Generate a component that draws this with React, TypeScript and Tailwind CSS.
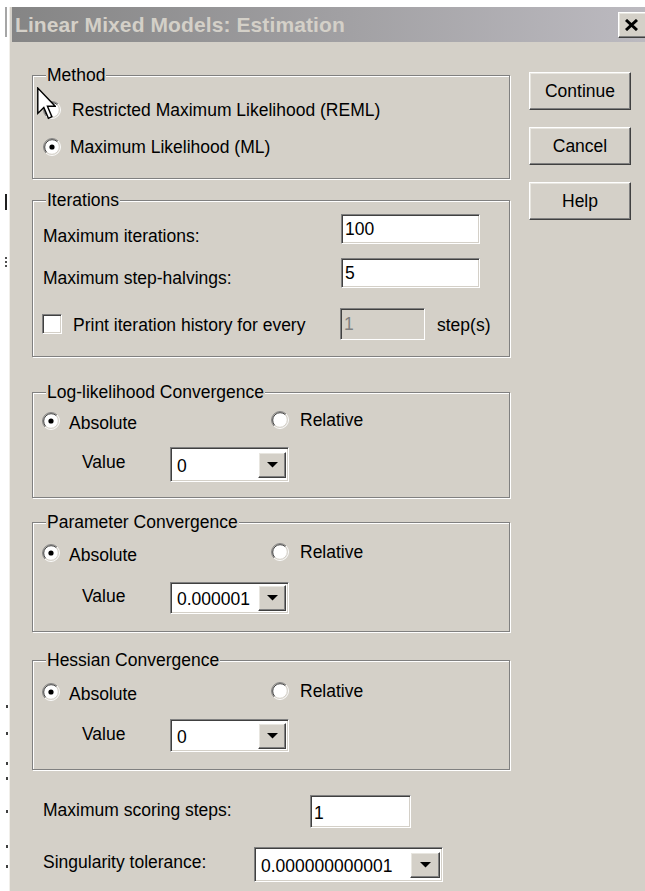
import type { ReactNode } from "react";

const sunken =
  "border border-t-[#808080] border-l-[#808080] border-r-white border-b-white shadow-[inset_1px_1px_0_#404040,inset_-1px_-1px_0_#d4d0c8]";
const raised =
  "border border-t-white border-l-white border-r-[#404040] border-b-[#404040] shadow-[inset_-1px_-1px_0_#808080,inset_1px_1px_0_#e8e6e0]";

const Radio = ({ checked = false }: { checked?: boolean }) => (
  <svg width="18" height="18" viewBox="0 0 18 18" className="shrink-0">
    <circle cx="9" cy="9" r="7.5" fill="#fff" />
    <path d="M2.99 15.01 A8.5 8.5 0 0 1 15.01 2.99" fill="none" stroke="#808080" />
    <path d="M15.01 2.99 A8.5 8.5 0 0 1 2.99 15.01" fill="none" stroke="#fff" />
    <path d="M3.7 14.3 A7.5 7.5 0 0 1 14.3 3.7" fill="none" stroke="#404040" />
    <path d="M14.3 3.7 A7.5 7.5 0 0 1 3.7 14.3" fill="none" stroke="#d4d0c8" />
    {checked && <circle cx="9" cy="9" r="2.6" fill="#000" />}
  </svg>
);

const Arrow = () => (
  <svg width="11" height="6" viewBox="0 0 11 6">
    <polygon points="0,0 11,0 5.5,5.5" fill="#000" />
  </svg>
);

const Combo = ({ value, w, h, btn = 28 }: { value: string; w: number; h: number; btn?: number }) => (
  <div
    className={`flex items-center bg-white ${sunken} ${w === 189 ? "w-[189px]" : "w-[119px]"} ${
      h === 35 ? "h-[35px]" : h === 32 ? "h-[32px]" : h === 33 ? "h-[33px]" : "h-[34px]"
    }`}
  >
    <span className="flex-1 pl-[6px] pt-[2px]">{value}</span>
    <div
      className={`mr-[2px] h-[26px] flex items-center justify-center bg-[#d4d0c8] ${raised} ${
        btn === 30 ? "w-[30px]" : "w-[28px]"
      }`}
    >
      <Arrow />
    </div>
  </div>
);

const GroupBox = ({ title, className, children }: { title: string; className: string; children: ReactNode }) => (
  <div className={`relative border border-[#808080] shadow-[1px_1px_0_#fff,inset_1px_1px_0_#fff] ${className}`}>
    <span className="absolute -top-[11px] left-[13px] px-[1px] bg-[#d4d0c8] leading-[20px]">{title}</span>
    {children}
  </div>
);

const RadioPair = ({ className }: { className: string }) => (
  <div className={`flex items-center h-[20px] pl-[9px] ${className}`}>
    <div className="flex items-center gap-[9px] w-[229px]">
      <Radio checked />
      <span className="pt-[3px]">Absolute</span>
    </div>
    <div className="flex items-center gap-[11px] -mt-[2px]">
      <Radio />
      <span>Relative</span>
    </div>
  </div>
);

const PushButton = ({ label }: { label: string }) => (
  <button className={`w-[102px] h-[38px] bg-[#d4d0c8] ${raised} flex items-center justify-center`}>{label}</button>
);

const Cursor = () => (
  <svg width="19" height="33" viewBox="0 0 12 20.5" className="absolute left-[37px] top-[87px]">
    <path
      d="M0.5 0.5 L0.5 16.5 L4.3 12.8 L7.2 19.6 L9.4 18.6 L6.6 12 L11.5 12 Z"
      fill="#fff"
      stroke="#000"
      strokeWidth="0.9"
      strokeLinejoin="miter"
    />
  </svg>
);

export default function App() {
  return (
    <div className="relative flex w-[645px] h-[891px] overflow-hidden bg-white text-black text-[17.5px] leading-[20px] font-['Liberation_Sans',Arial,sans-serif]">
      {/* scraps of the window behind */}
      <div className="w-[9px] shrink-0 flex flex-col">
        <div className="ml-[5px] w-[2px] mt-[7px] h-[30px] bg-[#a6a6a6]" />
        <div className="ml-[5px] w-[2px] mt-[157px] h-[16px] bg-[#202020]" />
        <div className="ml-[5px] w-[2px] mt-[47px] h-[2px] bg-[#505050]" />
        <div className="ml-[5px] w-[2px] mt-[2px] h-[2px] bg-[#505050]" />
        <div className="ml-[5px] w-[2px] mt-[2px] h-[2px] bg-[#505050]" />
        <div className="ml-[6px] w-[2px] mt-[438px] h-[3px] bg-[#404040]" />
        <div className="ml-[6px] w-[2px] mt-[24px] h-[3px] bg-[#404040]" />
        <div className="ml-[6px] w-[2px] mt-[27px] h-[3px] bg-[#404040]" />
        <div className="ml-[6px] w-[2px] mt-[12px] h-[3px] bg-[#404040]" />
        <div className="ml-[6px] w-[2px] mt-[30px] h-[3px] bg-[#404040]" />
        <div className="ml-[6px] w-[2px] mt-[32px] h-[3px] bg-[#404040]" />
        <div className="ml-[6px] w-[2px] mt-[17px] h-[3px] bg-[#404040]" />
      </div>

      <div className="flex-1 mt-[7px] flex flex-col bg-[#d4d0c8] border-l border-[#f1efea]">
        {/* caption */}
        <div className="ml-[2px] h-[35px] flex items-center overflow-hidden bg-gradient-to-r from-[#858585] to-[#bcbac0]">
          <span className="pl-[3px] font-bold text-[21px] text-[#d4d0c8] tracking-[0.1px]">
            Linear Mixed Models: Estimation
          </span>
          <div className={`ml-auto -mr-[3px] w-[30px] h-[26px] bg-[#d4d0c8] ${raised} flex items-center justify-center`}>
            <svg width="13" height="12" viewBox="0 0 13 12" className="-ml-[3px]">
              <path d="M1 1 L12 11 M12 1 L1 11" stroke="#000" strokeWidth="3" />
            </svg>
          </div>
        </div>

        <div className="flex pl-[22px]">
          <div className="w-[478px] flex flex-col">
            <GroupBox title="Method" className="mt-[33px] h-[104px] pt-[19px] pl-[10px] flex flex-col gap-[7px]">
              <div className="flex items-center h-[30px] gap-[11px]">
                <Radio />
                <span>Restricted Maximum Likelihood (REML)</span>
              </div>
              <div className="flex items-center h-[30px] gap-[9px]">
                <Radio checked />
                <span>Maximum Likelihood (ML)</span>
              </div>
            </GroupBox>

            <GroupBox title="Iterations" className="mt-[21px] h-[157px] pt-[13px] pl-[10px] flex flex-col">
              <div className="flex items-start h-[30px]">
                <span className="w-[298px] mt-[12px]">Maximum iterations:</span>
                <div className={`w-[139px] h-[30px] bg-white ${sunken} pl-[3px] flex items-center`}>100</div>
              </div>
              <div className="flex items-start h-[30px] mt-[14px]">
                <span className="w-[298px] mt-[10px]">Maximum step-halvings:</span>
                <div className={`w-[139px] h-[30px] bg-white ${sunken} pl-[3px] flex items-center`}>5</div>
              </div>
              <div className="flex items-center h-[32px] mt-[20px]">
                <div className="w-[298px] flex items-center gap-[11px] -ml-[1px]">
                  <div className={`w-[20px] h-[20px] bg-white ${sunken}`} />
                  <span className="pt-[2px]">Print iteration history for every</span>
                </div>
                <div className={`w-[85px] h-[32px] ${sunken} pl-[3px] flex items-center text-[#808080]`}>1</div>
                <span className="ml-[12px] pt-[2px]">step(s)</span>
              </div>
            </GroupBox>

            <GroupBox title="Log-likelihood Convergence" className="mt-[35px] h-[106px] pt-[18px]">
              <RadioPair className="" />
              <div className="flex items-center mt-[16px] pl-[49px]">
                <span className="w-[88px] mb-[6px]">Value</span>
                <Combo value="0" w={119} h={35} />
              </div>
            </GroupBox>

            <GroupBox title="Parameter Convergence" className="mt-[24px] h-[110px] pt-[20px]">
              <RadioPair className="" />
              <div className="flex items-center mt-[19px] pl-[49px]">
                <span className="w-[88px] mb-[4px]">Value</span>
                <Combo value="0.000001" w={119} h={32} />
              </div>
            </GroupBox>

            <GroupBox title="Hessian Convergence" className="mt-[28px] h-[110px] pt-[21px]">
              <RadioPair className="" />
              <div className="flex items-center mt-[17px] pl-[49px]">
                <span className="w-[88px] mb-[3px]">Value</span>
                <Combo value="0" w={119} h={33} />
              </div>
            </GroupBox>

            <div className="flex items-center mt-[25px] pl-[11px] h-[33px]">
              <span className="w-[267px] -mt-[4px]">Maximum scoring steps:</span>
              <div className={`w-[101px] h-[33px] bg-white ${sunken} pl-[3px] pt-[2px] flex items-center`}>1</div>
            </div>

            <div className="flex items-center mt-[19px] pl-[11px] h-[35px]">
              <span className="w-[211px] -mt-[6px]">Singularity tolerance:</span>
              <Combo value="0.000000000001" w={189} h={35} btn={30} />
            </div>
          </div>

          <div className="ml-[19px] pt-[30px] flex flex-col gap-[17px]">
            <PushButton label="Continue" />
            <PushButton label="Cancel" />
            <PushButton label="Help" />
          </div>
        </div>
      </div>

      <Cursor />
    </div>
  );
}
